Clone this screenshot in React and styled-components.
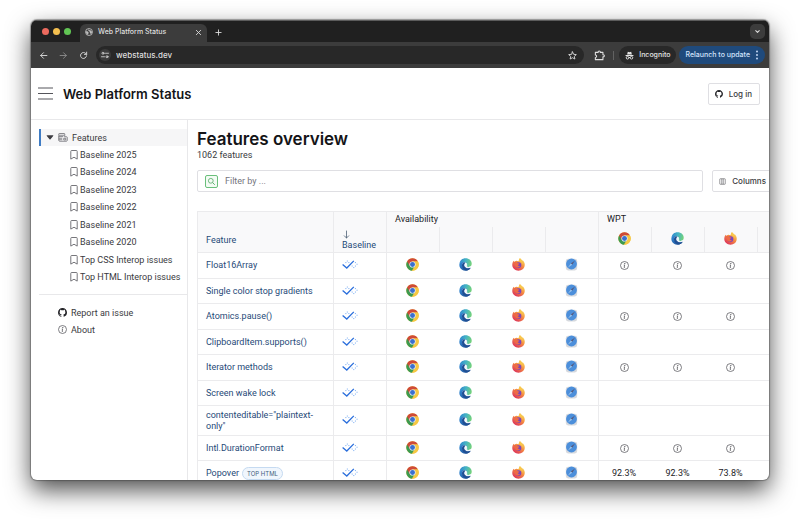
import React from "react";
import styled, { createGlobalStyle, css } from "styled-components";

const GlobalStyle = createGlobalStyle`
  *, *::before, *::after { box-sizing: border-box; }
  body {
    margin: 0;
    background: #fff;
    color: #3a3a3e;
    font: 9px/12px Roboto, Inter, sans-serif;
  }
  button, input { font: inherit; color: inherit; }
  button { margin: 0; padding: 0; border: 0; background: none; cursor: pointer; }
  a { color: inherit; text-decoration: none; }
  ul { margin: 0; padding: 0; list-style: none; }
  svg { display: block; flex: none; }
`;

const Desktop = styled.div`
  height: 100vh;
  padding: 20px 31px 41px;
  overflow: hidden;
`;

const Window = styled.div`
  display: flex;
  flex-direction: column;
  height: 100%;
  overflow: hidden;
  border-radius: 6px;
  background: #fff;
  box-shadow: 0 0 1px 1px rgba(60, 60, 60, 0.45), 0 10px 24px rgba(0, 0, 0, 0.7);
`;

const TabStrip = styled.div`
  display: flex;
  align-items: flex-end;
  flex: none;
  height: 22px;
  padding: 0 4px 0 11px;
  background: #202020;
  border-top: 1px solid #5c5c5c;
  color: #dedede;
  font-family: Inter, sans-serif;
`;

const Lights = styled.div`
  display: flex;
  gap: 4px;
  padding-bottom: 7px;
`;

const Light = styled.span`
  width: 7px;
  height: 7px;
  border-radius: 50%;
  background: ${(p) => p.$color};
`;

const Tab = styled.div`
  display: flex;
  align-items: center;
  gap: 5px;
  width: 127px;
  height: 18px;
  margin-left: 9px;
  padding: 0 5px 2px;
  border-radius: 6px 6px 0 0;
  background: #3c3c3c;
  font-size: 7px;
  font-weight: 500;
`;

const TabTitle = styled.span`
  flex: 1;
  white-space: nowrap;
`;

const IconButton = styled.button`
  display: flex;
  align-items: center;
  justify-content: center;
  width: ${(p) => p.$size || 12}px;
  height: ${(p) => p.$size || 12}px;
  opacity: ${(p) => (p.$dim ? 0.5 : 1)};
`;

const NewTab = styled(IconButton)`
  margin: 0 auto 4px 5px;
`;

const TabSearch = styled(IconButton)`
  margin-bottom: 3px;
  border-radius: 5px;
  background: #3c3c3c;
`;

const Toolbar = styled.div`
  display: flex;
  align-items: center;
  flex: none;
  height: 26px;
  padding: 0 4px 0 6px;
  background: #3c3c3c;
  color: #dedede;
  font-family: Inter, sans-serif;
`;

const NavButtons = styled.div`
  display: flex;
  gap: 8px;
  margin-right: 7px;
`;

const AddressBar = styled.label`
  display: flex;
  align-items: center;
  flex: 1;
  gap: 5px;
  height: 18px;
  padding: 0 6px 0 3px;
  border-radius: 9px;
  background: #282828;
`;

const SiteInfo = styled(IconButton)`
  border-radius: 50%;
  background: #3c3c3c;
`;

const AddressInput = styled.input`
  flex: 1;
  min-width: 0;
  padding: 0;
  border: 0;
  outline: 0;
  background: none;
  font-size: 8px;
  font-weight: 500;
`;

const Extensions = styled(IconButton)`
  margin-left: 9px;
`;

const Separator = styled.span`
  width: 1px;
  height: 9px;
  margin: 0 5px 0 8px;
  background: #626262;
`;

const Pill = styled.button`
  display: flex;
  align-items: center;
  gap: 5px;
  height: 18px;
  padding: 0 6px;
  border-radius: 9px;
  background: ${(p) => (p.$blue ? "#1f4a7c" : "#282828")};
  color: ${(p) => (p.$blue ? "#d3e3fd" : "#e3e3e3")};
  font-size: 7px;
  font-weight: 500;
  white-space: nowrap;
`;

const IncognitoPill = styled(Pill)`
  margin-right: 3px;
`;

const PageHeader = styled.header`
  display: flex;
  align-items: center;
  flex: none;
  height: 52px;
  padding: 0 9px 0 7px;
  border-bottom: 1px solid #e8e8ea;
`;

const SiteName = styled.h1`
  flex: 1;
  margin: 0 0 0 10px;
  color: #141417;
  font-family: Inter, sans-serif;
  font-size: 13px;
  line-height: 16px;
  font-weight: 600;
`;

const OutlineButton = styled.button`
  display: flex;
  align-items: center;
  flex: none;
  gap: 6px;
  height: 22px;
  padding: 0 7px 0 6px;
  border: 1px solid #dfdfe3;
  border-radius: 2px;
  background: #fff;
  font-family: Inter, sans-serif;
  font-size: 8px;
  font-weight: 500;
`;

const PageBody = styled.div`
  display: flex;
  flex: 1;
  min-height: 0;
`;

const Sidebar = styled.nav`
  flex: none;
  width: 157px;
  padding: 9px 0 0 8px;
  border-right: 1px solid #e8e8ea;
`;

const NavLink = styled.a`
  display: flex;
  align-items: center;
  gap: 4px;
  height: 17px;
  padding-left: 19px;
  white-space: nowrap;
`;

const SelectedLink = styled(NavLink)`
  padding-left: 5px;
  border-left: 2px solid #3f7cc4;
  background: #f6f6f7;
`;

const SubList = styled.ul`
  display: grid;
  grid-template-rows: repeat(8, 1fr);
  height: 140px;
  a { gap: 2px; padding-left: 31px; }
`;

const FooterLinks = styled.ul`
  display: grid;
  margin-top: 8px;
  padding-top: 9px;
  border-top: 1px solid #e8e8ea;
`;

const Main = styled.main`
  flex: 1;
  min-width: 0;
  padding: 9px 0 0 9px;
  overflow: hidden;
`;

const Title = styled.h2`
  margin: 0;
  color: #141417;
  font-family: Inter, sans-serif;
  font-size: 17px;
  line-height: 21px;
  font-weight: 600;
`;

const Count = styled.div`
  line-height: 11px;
`;

const FilterRow = styled.div`
  display: flex;
  gap: 9px;
  margin: 9px -5px 19px 0;
`;

const FilterBox = styled.label`
  display: flex;
  align-items: center;
  flex: 1;
  gap: 7px;
  height: 22px;
  padding: 0 7px;
  border: 1px solid #dfdfe3;
  border-radius: 2px;
`;

const FilterInput = styled.input`
  flex: 1;
  min-width: 0;
  padding: 0;
  border: 0;
  outline: 0;
  background: none;
  &::placeholder { color: #74747c; opacity: 1; }
`;

const line = "1px solid #ebebed";

const Table = styled.table`
  width: 613px;
  table-layout: fixed;
  border-collapse: separate;
  border-spacing: 0;
`;

const FeatureCol = styled.col`
  width: 136px;
`;

const HeadCell = styled.th`
  padding: 0 8px;
  border-top: ${(p) => (p.$sub ? 0 : line)};
  border-left: ${line};
  border-bottom: ${(p) => (p.$group ? 0 : line)};
  background: #f9f9fa;
  color: #1b1b1f;
  font-weight: 400;
  text-align: left;
  vertical-align: bottom;
  ${(p) => p.$group && css`
    height: 16px;
    line-height: 15px;
  `}
  ${(p) => p.$sub && css`
    height: 26px;
    padding: 0 2px 3px 0;
    vertical-align: middle;
    svg { margin: 0 auto; }
  `}
`;

const SortLink = styled.a`
  display: block;
  color: #1f4a78;
  line-height: 12px;
  padding-bottom: ${(p) => (p.$raised ? 6 : 1)}px;
`;

const Row = styled.tr`
  height: ${(p) => (p.$tall ? 30 : 26)}px;
  &:nth-child(even) { height: 25px; }
`;

const Cell = styled.td`
  padding: 0 8px;
  border-left: ${(p) => (p.$divider ? line : "0")};
  border-bottom: ${line};
  color: #1b1b1f;
  line-height: 11px;
  vertical-align: middle;
`;

const MarkCell = styled(Cell)`
  padding-bottom: 2px;
`;

const CenterCell = styled(Cell)`
  padding: 0 ${(p) => (p.$divider ? 2 : 0)}px ${(p) => (p.$browser ? 2 : 0)}px 0;
  text-align: center;
  svg { margin: 0 auto; }
`;

const FeatureLink = styled.a`
  color: #1f4a78;
`;

const Badge = styled.span`
  display: inline-block;
  margin-left: 3px;
  padding: 0 4px;
  border: 1px solid #c5daf1;
  border-radius: 7px;
  background: #f0f6fd;
  color: #45607e;
  font-family: Inter, sans-serif;
  font-size: 6px;
  line-height: 11px;
`;

const Stroke = ({ size = 10, w = 1.6, children }) => (
  <svg width={size} height={size} viewBox="0 0 16 16" fill="none" stroke="currentColor" strokeWidth={w} strokeLinecap="round" strokeLinejoin="round" aria-hidden="true">
    {children}
  </svg>
);

const Back = () => <Stroke size={9}><path d="M14 8H3M8 3L3 8l5 5" /></Stroke>;
const Forward = () => <Stroke size={9}><path d="M2 8h11M8 3l5 5-5 5" /></Stroke>;
const Reload = () => <Stroke size={9}><path d="M13.3 8.6A5.3 5.3 0 1 1 12 4.5L13.5 6M13.6 2v4h-4" /></Stroke>;
const Close = () => <Stroke size={7} w={2}><path d="M3 3l10 10M13 3L3 13" /></Stroke>;
const Plus = () => <Stroke size={7} w={2}><path d="M8 2v12M2 8h12" /></Stroke>;
const Chevron = () => <Stroke size={7} w={2.4}><path d="M4 6l4 4 4-4" /></Stroke>;
const Star = () => <Stroke size={9}><path d="M8 1.5l2 4.4 4.8.5-3.6 3.2 1 4.7L8 11.9l-4.2 2.4 1-4.7L1.200 6.400 6 5.900z" /></Stroke>;
const Puzzle = () => <Stroke size={11}><path d="M2 3.500h4V3a1.600 1.600 0 0 1 3.200 0v.5H13V7h.6a1.500 1.500 0 0 1 0 3H13v4H2v-3.200a1.800 1.800 0 0 0 0-3.600z" /></Stroke>;
const Tune = () => <Stroke size={8}><circle cx="4" cy="4.500" r="2" /><path d="M9 4.500h6M1 11.500h6" /><circle cx="12" cy="11.500" r="2" /></Stroke>;
const Dots = () => (
  <svg width="4" height="10" viewBox="0 0 4 10" fill="currentColor" aria-hidden="true">
    <circle cx="2" cy="1.500" r=".9" /><circle cx="2" cy="5" r=".9" /><circle cx="2" cy="8.500" r=".9" />
  </svg>
);
const Globe = () => (
  <svg width="8" height="8" viewBox="0 0 16 16" aria-hidden="true">
    <circle cx="8" cy="8" r="7" fill="none" stroke="#cfcfcf" strokeWidth="1.500" />
    <path d="M2 6.500c3-.5 4 .5 5 2s-.5 2.500-1 5C3 12.500 1.500 9.500 2 6.500zM8 1.500c0 2 .5 3 2.500 3s1.500 2 3.500 2.500c.5 2-1 4.500-2.500 5.500-.5-2-2.500-3-2-4.500S6 6 6.500 4.500z" fill="#bdbdbd" />
  </svg>
);
const Incognito = () => (
  <svg width="9" height="9" viewBox="0 0 16 16" aria-hidden="true">
    <path d="M5 1.500L8 2.400l3-.9 1.300 4.500H3.700zM1 7h14v1.700H1z" fill="currentColor" />
    <g fill="none" stroke="currentColor" strokeWidth="1.700"><circle cx="4.500" cy="12" r="2.300" /><circle cx="11.500" cy="12" r="2.300" /><path d="M6.800 11.600h2.400" /></g>
  </svg>
);
const Menu = () => (
  <svg width="15" height="13" viewBox="0 0 15 13" stroke="#55555b" aria-hidden="true">
    <path d="M0 1h15M0 6.500h15M0 12h15" />
  </svg>
);
const Github = ({ size = 9 }) => (
  <svg width={size} height={size} viewBox="0 0 16 16" fill="#242428" aria-hidden="true">
    <path d="M8 0C3.580 0 0 3.580 0 8c0 3.540 2.290 6.530 5.470 7.590.4.070.55-.17.55-.38 0-.19-.01-.82-.01-1.490-2.010.37-2.530-.49-2.690-.94-.09-.23-.48-.94-.82-1.130-.28-.15-.68-.52-.01-.53.63-.01 1.080.58 1.230.82.720 1.210 1.870.87 2.330.66.070-.52.280-.87.510-1.070-1.780-.2-3.640-.89-3.640-3.950 0-.87.310-1.590.820-2.150-.08-.2-.36-1.020.08-2.120 0 0 .67-.21 2.200.82.640-.18 1.320-.27 2-.27s1.360.09 2 .27c1.530-1.040 2.200-.82 2.200-.82.440 1.100.160 1.920.080 2.120.510.560.820 1.270.820 2.150 0 3.070-1.870 3.750-3.650 3.950.290.250.540.730.540 1.480 0 1.070-.01 1.930-.01 2.200 0 .21.150.46.550.38A8.010 8.010 0 0 0 16 8c0-4.420-3.580-8-8-8z" />
  </svg>
);
const Info = ({ size = 9 }) => (
  <svg width={size} height={size} viewBox="0 0 18 18" fill="none" stroke="#55555b" strokeWidth="1.500" aria-hidden="true">
    <circle cx="9" cy="9" r="8" /><path d="M7.500 8h1.800L8.300 12.800h1.700" /><circle cx="9.700" cy="5.300" r=".6" fill="#55555b" />
  </svg>
);
const Caret = () => (
  <svg width="8" height="5" viewBox="0 0 8 5" fill="#3c3c42" aria-hidden="true">
    <path d="M1.200.300h5.600c.5 0 .7.500.4.800L4.500 4.300a.7.700 0 0 1-1 0L.8 1.100C.5.800.7.300 1.200.300z" />
  </svg>
);
const Layers = () => (
  <svg width="10" height="9" viewBox="0 0 20 18" fill="none" stroke="#66666c" strokeWidth="1.500" aria-hidden="true">
    <rect x="1.500" y="1" width="12" height="3.500" rx="1" /><path d="M1.500 7.200h9M1.500 10.500h7M1.500 13.500h7M13.500 4.500v2.500" /><path d="M1.500 4.500v10a2 2 0 0 0 2 2h13a2 2 0 0 0 2-2V9a1.500 1.500 0 0 0-1.500-1.500h-4.500" /><path d="M11.500 10.500h4v3.500h-4z" />
  </svg>
);
const Bookmark = () => (
  <svg width="8" height="10" viewBox="0 0 8 10" fill="none" stroke="#66666c" strokeWidth=".9" strokeLinejoin="round" aria-hidden="true">
    <path d="M.8 1.300q0-.8.800-.8h4.800q.8 0 .8.800v7.800L4 7.200.8 9.100z" />
  </svg>
);
const Search = () => (
  <svg width="13" height="13" viewBox="0 0 13 13" fill="none" aria-hidden="true">
    <rect x=".5" y=".5" width="12" height="12" rx="1.500" fill="#f3fbf4" stroke="#6abf7b" />
    <circle cx="5.800" cy="5.800" r="2.400" stroke="#52a865" strokeWidth=".8" /><path d="M7.600 7.600l2.200 2.200" stroke="#52a865" strokeWidth=".9" />
  </svg>
);
const ColumnsIcon = () => (
  <svg width="7" height="7" viewBox="0 0 14 14" fill="none" stroke="#5a5a60" strokeWidth="1.200" aria-hidden="true">
    <rect x="1.500" y="1.500" width="11" height="11" rx="1" /><path d="M5.500 1.500v11M8.500 1.500v11" />
  </svg>
);
const SortArrow = () => (
  <svg width="9" height="9" viewBox="0 0 9 9" fill="none" stroke="#4d5f75" strokeWidth=".8" strokeLinecap="round" strokeLinejoin="round" aria-hidden="true">
    <path d="M4.500 1v7M2.300 5.800l2.200 2.200 2.200-2.200" />
  </svg>
);
const BaselineMark = () => (
  <svg width="16" height="9" viewBox="0 0 16 9" fill="none" aria-label="Newly available" role="img">
    <path d="M.6 4.400L4.800 8 11.800.9" stroke="#2b6fdc" strokeWidth="1.300" />
    <g fill="#8fbaf4">
      <rect x="3.300" y="2" width="1.100" height="1.100" /><rect x="4.800" y=".5" width="1.100" height="1.100" /><rect x="6.300" y="2" width="1.100" height="1.100" />
      <rect x="12.900" y="2" width="1.100" height="1.100" /><rect x="14.500" y="3.700" width="1.100" height="1.100" /><rect x="12.900" y="5.500" width="1.100" height="1.100" />
      <rect x="11.200" y="7" width="1.100" height="1.100" /><rect x="9.600" y="5.500" width="1.100" height="1.100" />
    </g>
  </svg>
);
const Chrome = () => (
  <svg width="13" height="13" viewBox="0 0 48 48" role="img" aria-label="Chrome">
    <circle cx="24" cy="24" r="23" fill="#f6c844" />
    <path d="M24 24L4.100 12.500A23 23 0 0 0 22 46.900L34 29.700z" fill="#3c9a50" />
    <path d="M4.100 12.500A23 23 0 0 1 43.900 12.500H24L14 29.800z" fill="#cf4a38" />
    <path d="M24 13h20.200A23 23 0 0 1 22 46.900L33.500 29.500z" fill="#f6c844" />
    <circle cx="24" cy="24" r="11.500" fill="#e8edf6" /><circle cx="24" cy="24" r="9" fill="#3a70cf" />
  </svg>
);
const Edge = () => (
  <svg width="13" height="13" viewBox="0 0 48 48" role="img" aria-label="Edge">
    <defs>
      <linearGradient id="edgeTop" x1="0" y1=".3" x2="1" y2=".5"><stop stopColor="#2f86cf" /><stop offset=".5" stopColor="#45b4c4" /><stop offset="1" stopColor="#74d27a" /></linearGradient>
      <linearGradient id="edgeSide" x1="0" y1="0" x2=".7" y2="1"><stop stopColor="#2f8bd8" /><stop offset="1" stopColor="#24589c" /></linearGradient>
    </defs>
    <path d="M1.500 22C3 9 12 1 24 1c14 0 23 9 23 20 0 8-6 12-12 12-5 0-8-2-6-5 3-6-2-12-10-12-9 0-17 3-17.500 6z" fill="url(#edgeTop)" />
    <path d="M1.500 22C4 16 11 13 19 14c-5 2-8 7-7 14 2 12 15 15 31 8-6 9-13 12-20 11C8 46 0 34 1.500 22z" fill="url(#edgeSide)" />
    <path d="M17 16c-6 3-8 12-4 20 4 7 11 11 17 10 6-1 11-5 13-10-6 3-13 3-18-1-5-3-7-8-5-12 1-3 3-5 5-5-2-2-5-3-8-2z" fill="#1f4f94" />
    <path d="M28 21c3 3 3 6 1 9-1 3 3 4 8 3 4-1 7-3 8-5 0 4-2 7-5 8-6 2-12 1-15-3-4-4-2-10 3-12z" fill="#e9f3f8" />
  </svg>
);
const Firefox = () => (
  <svg width="13" height="13" viewBox="0 0 48 48" role="img" aria-label="Firefox">
    <defs>
      <linearGradient id="foxFlame" x1=".85" y1=".1" x2=".25" y2=".9"><stop stopColor="#f9d95a" /><stop offset=".45" stopColor="#f58f42" /><stop offset="1" stopColor="#df3b58" /></linearGradient>
    </defs>
    <path d="M30 0c2 4 6 6 9 10l1-2c5 6 8 12 7 19-1 12-11 20-23 20S1 38 1 26c0-7 2-12 6-16l1 5c2-3 5-4 8-5 3 0 6 1 8 2 1-5 3-9 6-12z" fill="url(#foxFlame)" />
    <circle cx="24" cy="26" r="10.500" fill="#7a45bd" />
    <path d="M7 16c5-3 10-1 13 2 3 1 7 1 7 3 0 3-5 3-6 6 2 3 6 4 9 2-2 6-9 8-14 4-5-4-9-9-9-17z" fill="#ee6b45" />
    <path d="M27 12c8 1 12 7 11 14 3-7 1-16-5-19-3-2-4-4-3-7-4 3-6 8-3 12z" fill="#f9c84c" />
  </svg>
);
const Safari = () => (
  <svg width="13" height="13" viewBox="0 0 48 48" role="img" aria-label="Safari">
    <rect x="3" y="3" width="42" height="43" rx="9" fill="#d6d9de" />
    <circle cx="24" cy="22" r="20" fill="#4c8fdb" />
    <path d="M37 9L26.500 25 21.500 20z" fill="#57587a" /><path d="M11 35l10.500-15 5 5z" fill="#9cc3ea" />
  </svg>
);

const BROWSERS = [Chrome, Edge, Firefox, Safari];

const SUBPAGES = [
  "Baseline 2025", "Baseline 2024", "Baseline 2023", "Baseline 2022",
  "Baseline 2021", "Baseline 2020", "Top CSS Interop issues", "Top HTML Interop issues",
];

const FEATURES = [
  { name: "Float16Array", info: true },
  { name: "Single color stop gradients" },
  { name: "Atomics.pause()", info: true },
  { name: "ClipboardItem.supports()" },
  { name: "Iterator methods", info: true },
  { name: "Screen wake lock" },
  { name: 'contenteditable="plaintext-only"', tall: true },
  { name: "Intl.DurationFormat", info: true },
  { name: "Popover", badge: "TOP HTML", scores: ["92.3%", "92.3%", "73.8%"] },
];

function FeatureRow({ feature }) {
  return (
    <Row $tall={feature.tall}>
      <Cell $divider>
        <FeatureLink href="#feature">{feature.name}</FeatureLink>
        {feature.badge && <Badge>{feature.badge}</Badge>}
      </Cell>
      <MarkCell $divider><BaselineMark /></MarkCell>
      {BROWSERS.map((Icon, i) => (
        <CenterCell key={i} $browser $divider={i === 0}><Icon /></CenterCell>
      ))}
      {BROWSERS.map((_, i) => (
        <CenterCell key={i} $divider={i === 0}>
          {feature.info && <Info />}
          {feature.scores && feature.scores[i]}
        </CenterCell>
      ))}
    </Row>
  );
}

export default function App() {
  return (
    <Desktop>
      <GlobalStyle />
      <Window>
        <TabStrip>
          <Lights>
            <Light $color="#ec6a5e" /><Light $color="#f4bf4f" /><Light $color="#61c554" />
          </Lights>
          <Tab>
            <Globe />
            <TabTitle>Web Platform Status</TabTitle>
            <IconButton $size={8} aria-label="Close tab"><Close /></IconButton>
          </Tab>
          <NewTab aria-label="New tab"><Plus /></NewTab>
          <TabSearch $size={15} aria-label="Search tabs"><Chevron /></TabSearch>
        </TabStrip>
        <Toolbar>
          <NavButtons>
            <IconButton aria-label="Back"><Back /></IconButton>
            <IconButton $dim aria-label="Forward"><Forward /></IconButton>
            <IconButton aria-label="Reload"><Reload /></IconButton>
          </NavButtons>
          <AddressBar>
            <SiteInfo aria-label="Site information"><Tune /></SiteInfo>
            <AddressInput aria-label="Address" defaultValue="webstatus.dev" />
            <IconButton aria-label="Bookmark this tab"><Star /></IconButton>
          </AddressBar>
          <Extensions aria-label="Extensions"><Puzzle /></Extensions>
          <Separator />
          <IncognitoPill><Incognito />Incognito</IncognitoPill>
          <Pill $blue>Relaunch to update<Dots /></Pill>
        </Toolbar>
        <PageHeader>
          <IconButton $size={15} aria-label="Menu"><Menu /></IconButton>
          <SiteName>Web Platform Status</SiteName>
          <OutlineButton><Github size={8} />Log in</OutlineButton>
        </PageHeader>
        <PageBody>
          <Sidebar>
            <SelectedLink href="#features"><Caret /><Layers />Features</SelectedLink>
            <SubList>
              {SUBPAGES.map((name) => (
                <li key={name}><NavLink href="#baseline"><Bookmark />{name}</NavLink></li>
              ))}
            </SubList>
            <FooterLinks>
              <li><NavLink href="#issue"><Github />Report an issue</NavLink></li>
              <li><NavLink href="#about"><Info />About</NavLink></li>
            </FooterLinks>
          </Sidebar>
          <Main>
            <Title>Features overview</Title>
            <Count>1062 features</Count>
            <FilterRow>
              <FilterBox><Search /><FilterInput aria-label="Filter" placeholder="Filter by ..." /></FilterBox>
              <OutlineButton><ColumnsIcon />Columns</OutlineButton>
            </FilterRow>
            <Table>
              <colgroup>
                <FeatureCol />
                {Array.from({ length: 9 }, (_, i) => <col key={i} />)}
              </colgroup>
              <thead>
                <tr>
                  <HeadCell rowSpan={2}><SortLink $raised href="#feature">Feature</SortLink></HeadCell>
                  <HeadCell rowSpan={2}><SortLink href="#baseline"><SortArrow />Baseline</SortLink></HeadCell>
                  <HeadCell $group colSpan={4}>Availability</HeadCell>
                  <HeadCell $group colSpan={4}>WPT</HeadCell>
                </tr>
                <tr>
                  {BROWSERS.map((_, i) => <HeadCell key={i} $sub />)}
                  {BROWSERS.map((Icon, i) => <HeadCell key={i} $sub><Icon /></HeadCell>)}
                </tr>
              </thead>
              <tbody>
                {FEATURES.map((f) => <FeatureRow key={f.name} feature={f} />)}
              </tbody>
            </Table>
          </Main>
        </PageBody>
      </Window>
    </Desktop>
  );
}
